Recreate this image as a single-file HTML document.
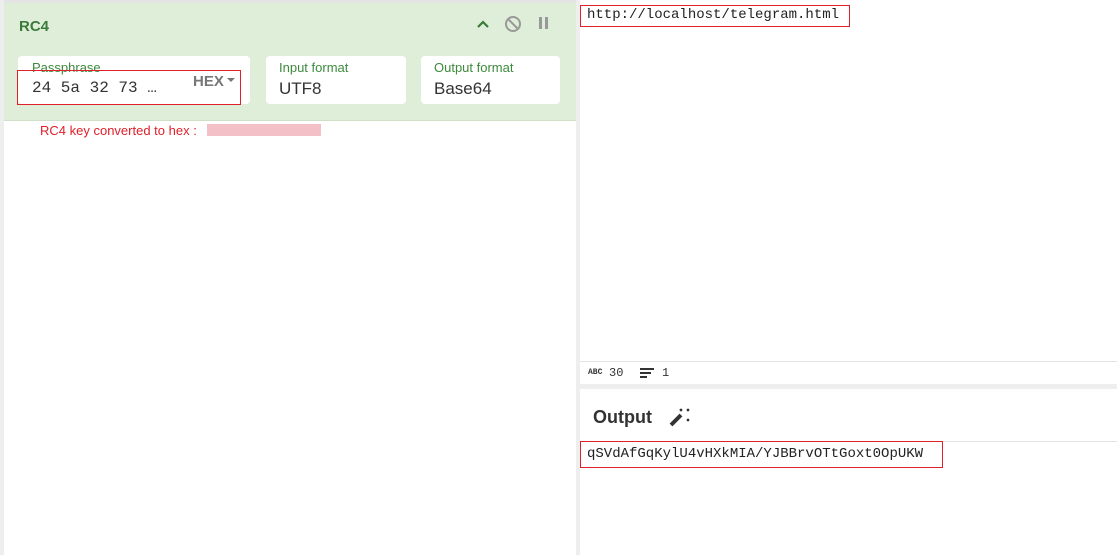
<!DOCTYPE html>
<html><head><style>
body{margin:0;width:1117px;height:555px;position:relative;overflow:hidden;background:#fff;font-family:"Liberation Sans",sans-serif}
.a{position:absolute}
.box{position:absolute;background:#fff;border-radius:4px}
.lbl{position:absolute;font-size:13px;color:#3c8a3c}
.val{position:absolute;font-size:17px;color:#333}
.mono{font-family:"Liberation Mono",monospace}
</style></head><body>
<div class="a" style="left:0;top:0;width:4px;height:555px;background:#eee"></div>
<div class="a" style="left:4px;top:0;width:572px;height:3px;background:#e4e4e4"></div>
<div class="a" style="left:4px;top:3px;width:572px;height:117px;background:#dfeed8"></div>
<div class="a" style="left:4px;top:120px;width:572px;height:1px;background:#d0e0c8"></div>
<div class="a" style="left:19px;top:18px;font-size:15px;font-weight:bold;color:#3b7a3b">RC4</div>
<svg class="a" style="left:476px;top:17px" width="14" height="14"><path d="M2 10 L7 5 L12 10" stroke="#3b7a3b" stroke-width="2.2" fill="none"/></svg>
<svg class="a" style="left:504px;top:15px" width="18" height="18"><circle cx="9" cy="9" r="7" stroke="#999" stroke-width="2" fill="none"/><path d="M4 4 L14 14" stroke="#999" stroke-width="2"/></svg>
<div class="a" style="left:539px;top:17px;width:3px;height:12px;background:#999"></div>
<div class="a" style="left:545px;top:17px;width:3px;height:12px;background:#999"></div>
<div class="box" style="left:18px;top:56px;width:232px;height:48px"></div>
<div class="lbl" style="left:32px;top:60px">Passphrase</div>
<div class="a" style="left:17px;top:70px;width:222px;height:33px;border:1px solid #e0202a"></div>
<div class="val mono" style="left:32px;top:79px;font-size:16px">24 5a 32 73 …</div>
<div class="a" style="left:193px;top:73px;font-size:15px;font-weight:bold;color:#777">HEX</div>
<svg class="a" style="left:226px;top:77px" width="10" height="6"><path d="M1 1 L9 1 L5 5Z" fill="#777"/></svg>
<div class="box" style="left:266px;top:56px;width:140px;height:48px"></div>
<div class="lbl" style="left:279px;top:60px">Input format</div>
<div class="val" style="left:279px;top:79px">UTF8</div>
<div class="box" style="left:421px;top:56px;width:139px;height:48px"></div>
<div class="lbl" style="left:434px;top:60px">Output format</div>
<div class="val" style="left:434px;top:79px">Base64</div>
<div class="a" style="left:40px;top:123px;font-size:13px;color:#e0202a">RC4 key converted to hex : </div>
<div class="a" style="left:207px;top:124px;width:114px;height:12px;background:#f4c0c8"></div>
<div class="a" style="left:576px;top:0;width:4px;height:555px;background:#eee"></div>
<div class="a mono" style="left:580px;top:5px;width:268px;height:20px;border:1px solid #e0202a"></div>
<div class="a mono" style="left:587px;top:7px;font-size:14px;color:#222">http://localhost/telegram.html</div>
<div class="a" style="left:580px;top:361px;width:537px;height:1px;background:#e2e2e2"></div>
<div class="a mono" style="left:588px;top:368px;font-size:8px;font-weight:bold;color:#333">ABC</div>
<div class="a mono" style="left:609px;top:366px;font-size:12px;color:#333">30</div>
<div class="a" style="left:640px;top:368px;width:14px;height:2px;background:#333"></div>
<div class="a" style="left:640px;top:372px;width:11px;height:2px;background:#333"></div>
<div class="a" style="left:640px;top:376px;width:7px;height:2px;background:#333"></div>
<div class="a mono" style="left:662px;top:366px;font-size:12px;color:#333">1</div>
<div class="a" style="left:580px;top:384px;width:537px;height:5px;background:#eee"></div>
<div class="a" style="left:593px;top:407px;font-size:18px;font-weight:bold;color:#333">Output</div>
<svg class="a" style="left:668px;top:405px" width="24" height="24"><path d="M3 20 L13 10" stroke="#333" stroke-width="4"/><path d="M12 4l2 2m0-2l-2 2M19 4l2 2m0-2l-2 2M19 14l2 2m0-2l-2 2" stroke="#333" stroke-width="1.5"/></svg>
<div class="a" style="left:580px;top:441px;width:537px;height:1px;background:#e2e2e2"></div>
<div class="a" style="left:580px;top:441px;width:361px;height:25px;border:1px solid #e0202a"></div>
<div class="a mono" style="left:587px;top:446px;font-size:14px;color:#222">qSVdAfGqKylU4vHXkMIA/YJBBrvOTtGoxt0OpUKW</div>
</body></html>
